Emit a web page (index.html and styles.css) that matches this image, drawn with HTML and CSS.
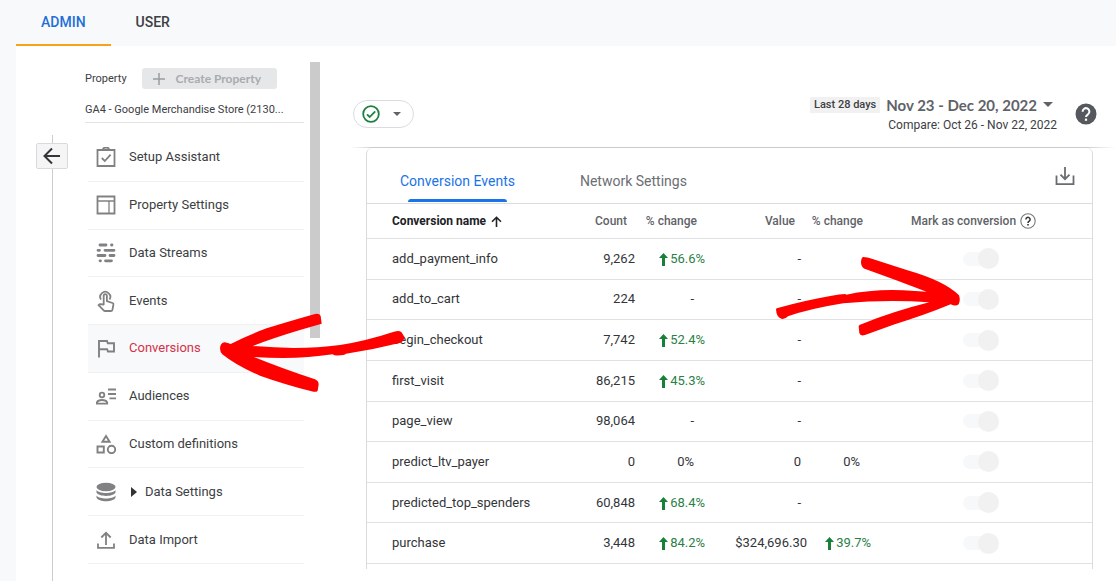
FILE: index.html
```html
<!DOCTYPE html>
<html lang="en">
<head>
<meta charset="utf-8">
<title>Admin - Conversions</title>
<link rel="stylesheet" href="styles.css">
</head>
<body>
<div class="page">
  <header class="tabs">
    <a class="tab tab-active" href="#admin">ADMIN</a>
    <a class="tab" href="#user">USER</a>
  </header>
  <div class="panel">
    <div class="rail">
      <span class="rail-start"></span>
      <button class="back" type="button" aria-label="Back">
        <svg width="20" height="18" viewBox="0 0 20 18" fill="none" stroke="#333639" stroke-width="2"><path d="M18 9H3M10 1.500L2.500 9l7.500 7.500"/></svg>
      </button>
      <span class="rail-line"></span>
    </div>
    <aside class="property">
      <div class="property-head">
        <span>Property</span>
        <button class="create" type="button" disabled>
          <svg width="12" height="12" viewBox="0 0 12 12" stroke="#9b9c9e" stroke-width="1.500"><path d="M6 0v12M0 6h12"/></svg>
          Create Property
        </button>
      </div>
      <div class="property-name">GA4 - Google Merchandise Store (2130...</div>
      <nav class="nav">
        <a class="item" href="#setup"><svg class="icon" viewBox="0 0 20 20" fill="none" stroke="#808182" stroke-width="1.800"><path d="M1.500 3h17v16h-17zM5.800 11l3 3 5.800-6.300"/><path d="M7 2.500a3 2 0 0 1 6 0" /></svg>Setup Assistant</a>
        <a class="item" href="#settings"><svg class="icon" viewBox="0 0 20 20" fill="none" stroke="#808182"><path stroke-width="1.800" d="M1.500 1.500h17v17h-17z"/><path stroke-width="1.300" d="M1.500 6h17M13 6v12"/></svg>Property Settings</a>
        <a class="item" href="#streams"><svg class="icon" viewBox="0 0 20 20" fill="none" stroke="#808182" stroke-width="2.800" stroke-linecap="round"><path d="M4 2h6M15.500 2h.5M2 7.300h1.500M9 7.300h9M2 12.500h7M14 12.500h4M4 17.800h.5M9.500 17.800h6"/></svg>Data Streams</a>
        <a class="item" href="#events"><svg class="icon icon-tall" viewBox="0 0 20 22" fill="none" stroke="#808182" stroke-width="1.800"><path d="M5 9.500a5 5 0 1 1 8.500 0"/><path d="M7.700 14.500V5.800a1.600 1.600 0 0 1 3.200 0v5.400l5.600 1.800q1.200.5.900 1.800l-1 5q-.3 1.200-1.500 1.200H9q-.8 0-1.300-.6L2.500 15.200l1.200-1z" stroke-linejoin="round"/></svg>Events</a>
        <a class="item item-active" href="#conversions"><svg class="icon" viewBox="0 0 20 20" fill="none" stroke="#808182" stroke-width="1.900"><path d="M3 19.500V3h8l.8 2.300H18v8.200h-6l-.9-2.300H3"/></svg>Conversions</a>
        <a class="item" href="#audiences"><svg class="icon" viewBox="0 0 20 20" fill="none" stroke="#808182" stroke-width="1.800"><path d="M12 3.500h8M12 8h8M13.500 12.300H20"/><circle cx="6" cy="9" r="2.300"/><path d="M.9 17.600v-1.300Q2 14 6 14t5.200 2.300v1.300z"/></svg>Audiences</a>
        <a class="item" href="#definitions"><svg class="icon" viewBox="0 0 20 20" fill="none" stroke="#808182" stroke-width="1.900"><path d="M10 2l3.600 5.800H6.400zM1.500 12.500h6.300v6H1.500z"/><circle cx="15.500" cy="15.500" r="3.700"/></svg>Custom definitions</a>
        <a class="item" href="#data"><svg class="icon" viewBox="0 0 20 20" fill="#808182"><ellipse cx="10" cy="5" rx="9.500" ry="4.200"/><path d="M.5 8c2 4 17 4 19 0v2.500c-2 4.500-17 4.500-19 0zM.5 13.500c2 4 17 4 19 0V15.500c-2 5-17 5-19 0z"/></svg><svg class="expand" viewBox="0 0 6 10" fill="#333"><path d="M0 0l6 5-6 5z"/></svg>Data Settings</a>
        <a class="item" href="#import"><svg class="icon" viewBox="0 0 20 20" fill="none" stroke="#808182" stroke-width="1.800"><path d="M10 15V3M5.300 7.500L10 2.800l4.700 4.700M2 13.500v4.400h16v-4.400"/></svg>Data Import</a>
      </nav>
    </aside>
    <div class="scroll"><div class="thumb"></div></div>
    <main class="main">
      <div class="toolbar">
        <button class="status" type="button" aria-label="Status">
          <svg width="18" height="18" viewBox="0 0 18 18" fill="none" stroke="#1e8040" stroke-width="1.800"><circle cx="9" cy="9" r="7.800"/><path d="M5 9.300l2.700 2.700 5.500-5.700"/></svg>
          <svg width="8" height="4" viewBox="0 0 8 4" fill="#5f6368"><path d="M0 0h8L4 4z"/></svg>
        </button>
        <div class="dates">
          <div class="range">
            <span class="chip">Last 28 days</span>
            <button class="period" type="button">Nov 23 - Dec 20, 2022
              <svg width="10" height="5" viewBox="0 0 10 5" fill="#5f6368"><path d="M0 0h10L5 5z"/></svg>
            </button>
          </div>
          <div class="compare">Compare: Oct 26 - Nov 22, 2022</div>
        </div>
        <button class="plain" type="button" aria-label="Help">
          <svg width="22" height="22" viewBox="0 0 22 22"><circle cx="11" cy="11" r="10.500" fill="#55585d"/><path d="M7.600 8.700a3.400 3.400 0 1 1 5.400 2.600q-2 1.200-2 2.700" fill="none" stroke="#fff" stroke-width="2"/><path d="M9.900 15.600h2.200v2.200H9.900z" fill="#fff"/></svg>
        </button>
      </div>
      <div class="divider"></div>
      <section class="card">
        <div class="card-tabs">
          <button class="card-tab card-tab-active" type="button">Conversion Events</button>
          <button class="card-tab" type="button">Network Settings</button>
          <button class="plain download" type="button" aria-label="Download">
            <svg width="20" height="20" viewBox="0 0 20 20" fill="none" stroke="#696c70" stroke-width="1.800"><path d="M10 1v12M5.500 8.700l4.500 4.500 4.500-4.500M1.500 9.500v8.600h17V9.500"/></svg>
          </button>
        </div>
        <div class="table-wrap">
        <table class="table">
          <colgroup><col><col class="c-count"><col class="c-change"><col class="c-value"><col class="c-change2"><col class="c-mark"></colgroup>
          <thead><tr>
            <th class="name sorted">Conversion name <svg class="sort" width="11" height="11" viewBox="0 0 11 11" fill="none" stroke="#222" stroke-width="1.600"><path d="M5.500 11V1.500M1 5.800l4.500-4.500L10 5.800"/></svg></th>
            <th>Count</th><th>% change</th><th class="h-value">Value</th><th>% change</th>
            <th class="mark"><span class="mark-head">Mark as conversion <svg width="16" height="16" viewBox="0 0 16 16" fill="none"><circle cx="8" cy="8" r="7.200" stroke="#77797c" stroke-width="1.100"/><path d="M5.900 6.500a2.100 2.100 0 1 1 3.300 1.700Q8 9 8 9.900" stroke="#333" stroke-width="1.500"/><path d="M7.200 10.900h1.600v1.500H7.200z" fill="#333"/></svg></span></th>
          </tr></thead>
          <tbody>
            <tr><td class="name">add_payment_info</td><td>9,262</td><td class="up"><svg class="arrow" viewBox="0 0 9 13"><path d="M4.500 0L9 5H6v8H3V5H0z"/></svg>56.6%</td><td class="short">-</td><td></td><td class="toggle"><input class="switch" type="checkbox" checked disabled aria-label="Mark add_payment_info as conversion"></td></tr>
            <tr><td class="name">add_to_cart</td><td>224</td><td class="flat">-</td><td class="short">-</td><td></td><td class="toggle"><input class="switch" type="checkbox" checked disabled aria-label="Mark add_to_cart as conversion"></td></tr>
            <tr><td class="name">begin_checkout</td><td>7,742</td><td class="up"><svg class="arrow" viewBox="0 0 9 13"><path d="M4.500 0L9 5H6v8H3V5H0z"/></svg>52.4%</td><td class="short">-</td><td></td><td class="toggle"><input class="switch" type="checkbox" checked disabled aria-label="Mark begin_checkout as conversion"></td></tr>
            <tr><td class="name">first_visit</td><td>86,215</td><td class="up"><svg class="arrow" viewBox="0 0 9 13"><path d="M4.500 0L9 5H6v8H3V5H0z"/></svg>45.3%</td><td class="short">-</td><td></td><td class="toggle"><input class="switch" type="checkbox" checked disabled aria-label="Mark first_visit as conversion"></td></tr>
            <tr><td class="name">page_view</td><td>98,064</td><td class="flat">-</td><td class="short">-</td><td></td><td class="toggle"><input class="switch" type="checkbox" checked disabled aria-label="Mark page_view as conversion"></td></tr>
            <tr><td class="name">predict_ltv_payer</td><td>0</td><td class="flat">0%</td><td class="short">0</td><td class="flat">0%</td><td class="toggle"><input class="switch" type="checkbox" checked disabled aria-label="Mark predict_ltv_payer as conversion"></td></tr>
            <tr><td class="name">predicted_top_spenders</td><td>60,848</td><td class="up"><svg class="arrow" viewBox="0 0 9 13"><path d="M4.500 0L9 5H6v8H3V5H0z"/></svg>68.4%</td><td class="short">-</td><td></td><td class="toggle"><input class="switch" type="checkbox" checked disabled aria-label="Mark predicted_top_spenders as conversion"></td></tr>
            <tr><td class="name">purchase</td><td>3,448</td><td class="up"><svg class="arrow" viewBox="0 0 9 13"><path d="M4.500 0L9 5H6v8H3V5H0z"/></svg>84.2%</td><td>$324,696.30</td><td class="up"><svg class="arrow" viewBox="0 0 9 13"><path d="M4.500 0L9 5H6v8H3V5H0z"/></svg>39.7%</td><td class="toggle"><input class="switch" type="checkbox" checked disabled aria-label="Mark purchase as conversion"></td></tr>
          </tbody>
        </table>
        </div>
      </section>
    </main>
  </div>
  <svg class="pointer pointer-left" width="220" height="110" viewBox="0 0 660 330" fill="#f00"><path d="M60 145Q61 128 74 127Q84 129 92 132Q140 107 200 85Q260 66 345 42Q358 39 362 48L365 71L300 90Q220 114 158 138Q300 151 420 135Q500 122 582 95Q597 90 604 96L614 112Q611 126 599 129Q520 149 438 161Q434 167 403 166L398 163Q290 180 162 171Q240 203 345 238Q356 243 356 253L353 272Q348 278 335 274Q250 252 180 227Q110 198 67 163Q60 156 60 145Z"/></svg>
  <svg class="pointer pointer-right" width="220" height="100" viewBox="0 0 660 300" fill="#f00"><path d="M48 208Q48 204 56 203Q130 182 215 167Q240 163 256 162L259 164Q340 147 430 151L500 155Q410 121 318 88Q304 84 303 68Q303 54 309 51Q317 50 340 58L440 90Q555 123 597 166Q602 181 596 193Q587 200 572 193Q490 227 400 254L315 285Q300 289 298 279L296 258Q298 254 306 252Q400 214 508 187Q380 178 250 190Q150 206 84 229Q76 238 66 237Q49 233 48 208Z"/></svg>
</div>
</body>
</html>
```
FILE: styles.css
```css
* { box-sizing: border-box; }
body { margin: 0; font: 13px/16px Roboto, "Liberation Sans", sans-serif; color: #3c4043; background: #f8f9fb; }
button { font: inherit; color: inherit; border: 0; padding: 0; background: none; }
a { color: inherit; text-decoration: none; }
svg { display: block; flex: none; }

.page { position: relative; display: flex; flex-direction: column; min-height: 100vh; overflow: hidden; }
.tabs { display: flex; height: 46px; padding-left: 16px; }
.tab { padding: 14px 25px 0; font-size: 14px; font-weight: 500; border-bottom: 2px solid transparent; }
.tab-active { color: #1f6fd8; border-color: #f9a11b; }
.panel { flex: 1; display: flex; margin-left: 16px; background: #fff; }

.rail { display: flex; flex-direction: column; align-items: center; width: 69px; padding: 89px 17px 0 20px; }
.rail-start { width: 1px; height: 8px; background: #ccc; }
.rail-line { flex: 1; width: 1px; background: #ccc; }
.back { display: flex; align-items: center; justify-content: center; width: 32px; height: 26px; border: 1px solid #d8dadd; border-radius: 2px; background: #f5f5f6; }

.property { display: flex; flex-direction: column; width: 219px; padding: 22px 0 17px; font-size: 11px; }
.property-head { display: flex; align-items: center; justify-content: space-between; padding-right: 27px; }
.create { display: flex; align-items: center; gap: 11px; height: 21px; padding: 0 16px 0 11px; border-radius: 3px; background: #e6e7e9; color: #a9abae; font: 700 12px/16px Lato, Roboto, sans-serif; }
.property-name { margin-top: 13px; padding-bottom: 4px; border-bottom: 1px solid #e3e3e3; white-space: nowrap; overflow: hidden; }
.nav { flex: 1; display: grid; grid-auto-rows: 1fr; margin: 11px 0 0 3px; font-size: 13px; }
.item { display: flex; align-items: center; min-height: 40px; padding-left: 8px; border-bottom: 1px solid #f1f1f1; }
.item-active { background: #f8f9fb; color: #d23249; }
.icon { width: 20px; height: 20px; margin-right: 13px; }
.icon-tall { height: 22px; }
.expand { width: 6px; height: 10px; margin: 0 8px 0 2px; }

.scroll { width: 16px; padding: 16px 0 0 6px; }
.thumb { height: 276px; background: #cbcbcb; }

.main { flex: 1; display: flex; flex-direction: column; padding-bottom: 12px; }
.toolbar { display: flex; align-items: center; height: 101px; padding: 34px 19px 0 33px; }
.status { display: flex; align-items: center; justify-content: space-between; width: 61px; height: 28px; padding: 0 12px 0 8px; border: 1px solid #dadce0; border-radius: 14px; }
.dates { margin: 0 18px 0 auto; padding-top: 2px; text-align: right; font-size: 12px; }
.range { display: flex; align-items: center; justify-content: flex-end; gap: 6px; padding-right: 4px; }
.chip { padding: 0 4px; background: #f1f1f2; font-size: 11px; font-weight: 500; }
.period { display: flex; align-items: center; gap: 6px; font: 700 15px/20px Lato, Roboto, sans-serif; color: #5f6368; }
.compare { line-height: 20px; }
.divider { height: 1px; margin-left: 30px; background: linear-gradient(90deg, transparent, #c8cbce 24px, #c8cbce calc(100% - 30px), transparent); }

.card { flex: 1; display: flex; flex-direction: column; margin: 0 23px 0 46px; border: solid #dadce0; border-width: 0 1px; border-radius: 6px 6px 0 0; }
.card-tabs { display: flex; height: 55px; padding: 0 17px 0 33px; }
.card-tab { position: relative; height: 54px; padding-top: 12px; margin-right: 65px; font-size: 14px; color: #6b6e72; }
.card-tab-active { color: #1a73e8; }
.card-tab-active::after { content: ""; position: absolute; left: 8px; right: 8px; bottom: 0; height: 3px; border-radius: 3px 3px 0 0; background: #1a73e8; }
.download { margin-left: auto; }
.table-wrap { flex: 1; display: grid; padding-bottom: 5px; }
.table { width: 100%; height: 100%; border-collapse: separate; border-spacing: 0; table-layout: fixed; border-top: 1px solid #dadce0; color: #333539; font-size: 13px; }
.c-count { width: 80px; }
.c-change { width: 70px; }
.c-value { width: 102px; }
.c-change2 { width: 64px; }
.c-mark { width: 221px; }
th, td { padding: 0; border-bottom: 1px solid #dfe1e4; text-align: right; white-space: nowrap; }
th { height: 35px; padding-right: 8px; font-size: 12px; font-weight: 500; color: #5f6368; }
td { height: 36px; }
.h-value { padding-right: 12px; }
.name { padding-left: 25px; text-align: left; }
.sorted { color: #202124; font-weight: 700; }
.sort { display: inline-block; vertical-align: -2px; margin-left: 2px; }
.up { color: #2a7f46; }
.arrow { display: inline-block; width: 9px; height: 13px; margin-right: 2px; vertical-align: -3px; fill: #188038; }
.flat { padding-right: 11px; }
.short { padding-right: 6px; }
.mark { padding-left: 40px; text-align: left; }
.mark-head { display: flex; align-items: center; gap: 4px; }
.toggle { padding-left: 92px; text-align: left; }
.switch { appearance: none; display: grid; align-items: center; width: 36px; height: 21px; margin: 0; }
.switch::before, .switch::after { content: ""; grid-area: 1 / 1; }
.switch::before { width: 28px; height: 14px; border-radius: 7px; background: #f7f8f9; }
.switch::after { justify-self: end; width: 21px; height: 21px; border-radius: 50%; background: #f1f1f1; }

.pointer { position: absolute; pointer-events: none; }
.pointer-left { left: 200px; top: 300px; }
.pointer-right { left: 760px; top: 240px; }
```
